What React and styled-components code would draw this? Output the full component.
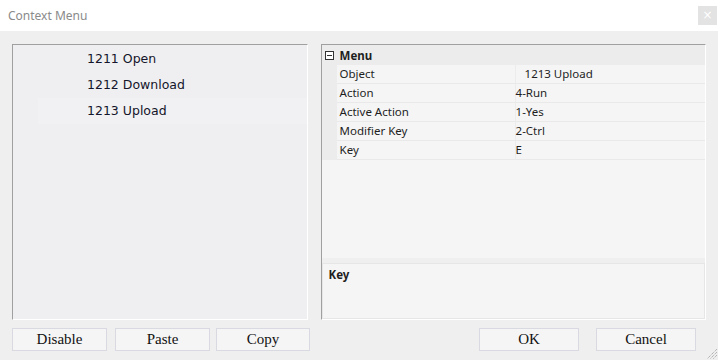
import styled, { createGlobalStyle } from 'styled-components';

const GlobalStyle = createGlobalStyle`
  html, body {
    margin: 0;
    padding: 0;
    background: #efefef;
  }
  * {
    box-sizing: border-box;
  }
`;

const items = [
  { id: 1211, name: 'Open' },
  { id: 1212, name: 'Download' },
  { id: 1213, name: 'Upload', selected: true },
];

const props = [
  { label: 'Object', value: '1213 Upload', indent: true },
  { label: 'Action', value: '4-Run' },
  { label: 'Active Action', value: '1-Yes' },
  { label: 'Modifier Key', value: '2-Ctrl' },
  { label: 'Key', value: 'E' },
];

const App = () => {
  return (
    <Window>
      <GlobalStyle />
      <TitleBar>
        <Title>Context Menu</Title>
        <CloseButton>×</CloseButton>
      </TitleBar>
      <Body>
        <Panels>
          <ListBox>
            {items.map((item) => (
              <ListItem key={item.id} $selected={item.selected}>
                {item.id} {item.name}
              </ListItem>
            ))}
          </ListBox>
          <PropertyPanel>
            <Grid>
              <CategoryRow>
                <Toggle>
                  <svg width="9" height="9" viewBox="0 0 9 9">
                    <rect x="0.5" y="0.5" width="8" height="8" fill="#fff" stroke="#333" />
                    <line x1="2" y1="4.5" x2="7" y2="4.5" stroke="#333" />
                  </svg>
                </Toggle>
                <CategoryName>Menu</CategoryName>
              </CategoryRow>
              {props.map((p) => (
                <PropRow key={p.label}>
                  <Gutter />
                  <PropLabel>{p.label}</PropLabel>
                  <PropValue $indent={p.indent}>{p.value}</PropValue>
                </PropRow>
              ))}
              <GridFill />
            </Grid>
            <Description>
              <DescTitle>Key</DescTitle>
            </Description>
          </PropertyPanel>
        </Panels>
        <ButtonRow>
          <ButtonGroup>
            <Button $width={95}>Disable</Button>
            <Button $width={95} $gap={8}>Paste</Button>
            <Button $width={94} $gap={6}>Copy</Button>
          </ButtonGroup>
          <ButtonGroup $right>
            <Button $width={100}>OK</Button>
            <Button $width={100} $gap={17}>Cancel</Button>
          </ButtonGroup>
        </ButtonRow>
        <Grip>
          <svg width="11" height="11" viewBox="0 0 11 11">
            <g stroke="#9a9a9a" strokeWidth="1" strokeDasharray="1 1">
              <line x1="11" y1="1" x2="1" y2="11" />
              <line x1="11" y1="4" x2="4" y2="11" />
              <line x1="11" y1="7" x2="7" y2="11" />
            </g>
          </svg>
        </Grip>
      </Body>
    </Window>
  );
};

const Window = styled.div`
  width: 718px;
  height: 360px;
  display: flex;
  flex-direction: column;
  background: #efefef;
  overflow: hidden;
`;

const TitleBar = styled.div`
  height: 31px;
  background: #fff;
  display: flex;
  align-items: center;
  justify-content: space-between;
  padding: 0 1px 0 8px;
`;

const Title = styled.div`
  font-family: 'Noto Sans', sans-serif;
  font-size: 12px;
  color: #8a8a8a;
`;

const CloseButton = styled.div`
  width: 19px;
  height: 19px;
  margin-top: -1px;
  background: #e3e3e3;
  color: #fff;
  font-family: 'DejaVu Sans', sans-serif;
  font-size: 12px;
  line-height: 19px;
  text-align: center;
`;

const Body = styled.div`
  position: relative;
  flex: 1;
  padding: 13px 12px 0 12px;
  display: flex;
  flex-direction: column;
`;

const Panels = styled.div`
  display: flex;
  gap: 13px;
  height: 276px;
`;

const sunken = `
  border-top: 1px solid #a0a0a0;
  border-left: 1px solid #a0a0a0;
  border-right: 1px solid #fff;
  border-bottom: 1px solid #fff;
`;

const ListBox = styled.div`
  ${sunken}
  width: 296px;
  background: #efeff1;
  padding-top: 1px;
`;

const ListItem = styled.div`
  height: 26px;
  line-height: 26px;
  padding-left: 49px;
  margin-left: 25px;
  font-family: 'DejaVu Sans', sans-serif;
  font-size: 12.5px;
  color: #14142a;
  background: ${({ $selected }) => ($selected ? '#f1f1f3' : 'transparent')};
`;

const PropertyPanel = styled.div`
  ${sunken}
  width: 386px;
  display: flex;
  flex-direction: column;
  background: #efefef;
`;

const Grid = styled.div`
  flex: 1;
  display: flex;
  flex-direction: column;
  background: #f5f5f5;
  font-family: 'Noto Sans', sans-serif;
  font-size: 11.5px;
  color: #1e1e1e;
`;

const CategoryRow = styled.div`
  height: 20px;
  display: flex;
  align-items: center;
  background: #ececec;
`;

const Toggle = styled.div`
  width: 15px;
  display: flex;
  justify-content: center;
  svg {
    display: block;
  }
`;

const CategoryName = styled.div`
  font-weight: bold;
  padding-left: 3px;
`;

const PropRow = styled.div`
  height: 19px;
  display: grid;
  grid-template-columns: 15px 178px 1fr;
`;

const Gutter = styled.div`
  background: #ececec;
`;

const PropLabel = styled.div`
  border-bottom: 1px solid #e9e9e9;
  padding-left: 3px;
  line-height: 18px;
  white-space: nowrap;
`;

const PropValue = styled.div`
  border-bottom: 1px solid #e9e9e9;
  border-left: 1px solid #ececec;
  padding-left: ${({ $indent }) => ($indent ? '9px' : '0')};
  line-height: 18px;
  white-space: nowrap;
`;

const GridFill = styled.div`
  flex: 1;
`;

const Description = styled.div`
  height: 56px;
  margin-top: 5px;
  background: #f5f5f5;
  border: 1px solid #e6e6e6;
  padding: 3px 6px;
`;

const DescTitle = styled.div`
  font-family: 'Noto Sans', sans-serif;
  font-size: 11.5px;
  font-weight: bold;
  color: #1e1e1e;
`;

const ButtonRow = styled.div`
  display: flex;
  justify-content: space-between;
  margin-top: 8px;
`;

const ButtonGroup = styled.div`
  display: flex;
  padding-right: ${({ $right }) => ($right ? '10px' : '0')};
`;

const Button = styled.div`
  width: ${({ $width }) => $width}px;
  height: 23px;
  margin-left: ${({ $gap }) => $gap || 0}px;
  background: #f5f5f5;
  border: 1px solid #d9d9e1;
  font-family: 'Liberation Serif', serif;
  font-size: 15px;
  color: #111;
  display: flex;
  align-items: center;
  justify-content: center;
`;

const Grip = styled.div`
  position: absolute;
  right: 1px;
  bottom: 1px;
  width: 11px;
  height: 11px;
  svg {
    display: block;
  }
`;

export default App;
